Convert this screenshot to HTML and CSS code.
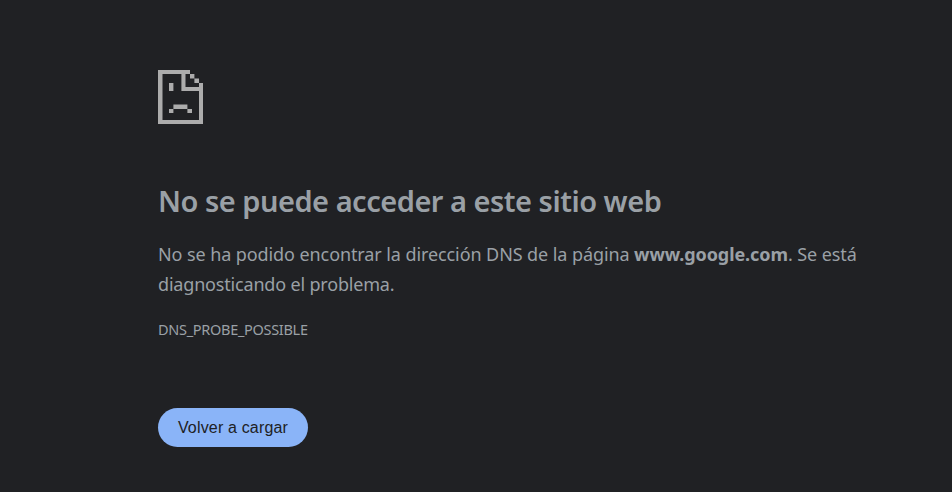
FILE: index.html
```
<!DOCTYPE html>
<html lang="es">
<head>
<meta charset="utf-8">
<title>www.google.com</title>
<link rel="stylesheet" href="styles.css">
</head>
<body>
<main class="error-page">
  <svg class="error-icon" viewBox="0 0 45 54" aria-hidden="true">
    <path d="M0 0H32V4H27.5V17H41V13H45V54H0ZM4.5 4V50H41V21H23.4V4Z" fill-rule="evenodd"/>
    <path d="M32 4h4.4v4.5H32ZM36.4 8.5H41V13h-4.6ZM11 13h4.4v8H11ZM15.4 34.5H29.4V39H15.4ZM11 39h4.4v4H11ZM29.4 39H34v4h-4.6Z"/>
  </svg>
  <h1 class="title">No se puede acceder a este sitio web</h1>
  <p class="summary">No se ha podido encontrar la dirección DNS de la página <strong class="host">www.google.com</strong>. Se está <span class="continuation">diagnosticando el problema.</span></p>
  <div class="error-code">DNS_PROBE_POSSIBLE</div>
  <button class="reload" type="button">Volver a cargar</button>
</main>
</body>
</html>
```
FILE: styles.css
```
body {
  margin: 0;
  background: #202124;
  color: #9aa0a6;
  font-family: "Segoe UI", "Noto Sans", sans-serif;
}

.error-page {
  width: 750px;
  padding: 70px 0 0 158px;
}

.error-icon {
  display: block;
  width: 45px;
  height: 54px;
  fill: #acacac;
}

.title {
  margin: 59px 0 0;
  font-size: 29px;
  font-weight: 600;
  line-height: 36px;
  letter-spacing: -0.49px;
  white-space: nowrap;
}

.summary {
  margin: 20px 0 0;
  font-size: 18px;
  line-height: 30px;
  letter-spacing: -0.09px;
}

.host {
  font-weight: 700;
}

.continuation {
  letter-spacing: -0.18px;
}

.error-code {
  margin-top: 20px;
  font-size: 14.5px;
  line-height: 20px;
  letter-spacing: -0.3px;
}

.reload {
  display: block;
  width: 150px;
  height: 39px;
  margin-top: 69px;
  padding: 0;
  border: 0;
  border-radius: 20px;
  background: #8ab4f8;
  color: #202124;
  font: 16px/39px "Liberation Sans", Arial, sans-serif;
  letter-spacing: 0.17px;
}
```
